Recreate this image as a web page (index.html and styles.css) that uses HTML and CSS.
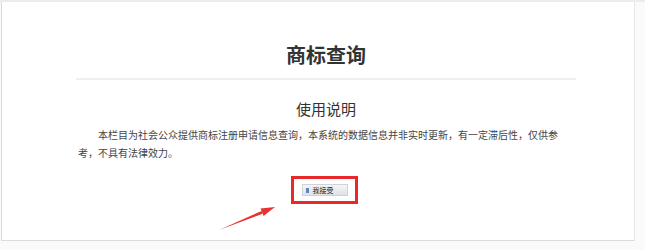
FILE: index.html
```html
<!DOCTYPE html>
<html lang="zh-CN">
<head>
    <meta charset="UTF-8">
    <title>商标查询</title>
    <link rel="stylesheet" href="styles.css">
</head>
<body>
    <div class="top-bar"></div>
    <div class="panel">
        <div class="content">
            <h1 class="title">商标查询</h1>
            <div class="divider"></div>
            <h2 class="subtitle">使用说明</h2>
            <p class="notice">本栏目为社会公众提供商标注册申请信息查询，本系统的数据信息并非实时更新，有一定滞后性，仅供参考，不具有法律效力。</p>
            <div class="action">
                <div class="highlight">
                    <button class="accept-btn"><span class="btn-icon"></span>我接受</button>
                </div>
            </div>
        </div>
        <!-- annotation arrow over the page -->
        <svg class="arrow" width="70" height="40" viewBox="0 0 70 40">
            <polygon points="2,32 44.5,12.9 45.6,15.7" fill="#e8322f"/>
            <polygon points="58,9 43.5,10.6 46.6,18" fill="#e8322f"/>
        </svg>
    </div>
</body>
</html>
```

FILE: styles.css
```css
body {
    margin: 0;
    background-color: #fafafa;
    font-family: "Noto Sans CJK SC", "Liberation Sans", sans-serif;
    color: #333;
}

.top-bar {
    height: 2px;
    background-color: #ececec;
}

.panel {
    position: relative;
    margin-left: 1px;
    width: 632px;
    height: 238px;
    background-color: white;
    border-left: 1px solid #d9d9d9;
    border-right: 1px solid #e6e6e6;
    border-bottom: 1px solid #dcdcdc;
}

.content {
    margin-left: 74px;
    width: 500px;
    padding-top: 39px;
}

.title {
    margin: 0;
    text-align: center;
    font-size: 20px;
    line-height: 28px;
    font-weight: bold;
    color: #333;
}

.divider {
    margin-top: 9px;
    height: 2px;
    background-color: #efefef;
}

.subtitle {
    margin: 18px 0 0;
    text-align: center;
    font-size: 15px;
    line-height: 22px;
    font-weight: normal;
    color: #333;
}

.notice {
    margin: 6px 0 0 2px;
    width: 486px;
    font-size: 10px;
    line-height: 18px;
    text-indent: 2em;
    color: #444;
}

.action {
    display: flex;
    justify-content: center;
    margin-top: 14px;
    padding-right: 3px;
}

.highlight {
    display: flex;
    align-items: center;
    justify-content: center;
    width: 61px;
    height: 22px;
    border: 3px solid #e8282b;
}

.accept-btn {
    display: flex;
    align-items: center;
    gap: 4px;
    width: 46px;
    height: 12px;
    padding: 0 3px;
    border: 1px solid #cfd3d8;
    background: linear-gradient(#f4f5f7, #dfe2e6);
    font-family: "Noto Sans CJK SC", sans-serif;
    font-size: 7px;
    line-height: 10px;
    color: #222;
}

.btn-icon {
    width: 3px;
    height: 5px;
    background-color: #5b86c4;
}

.arrow {
    position: absolute;
    left: 215px;
    top: 196px;
}
```
